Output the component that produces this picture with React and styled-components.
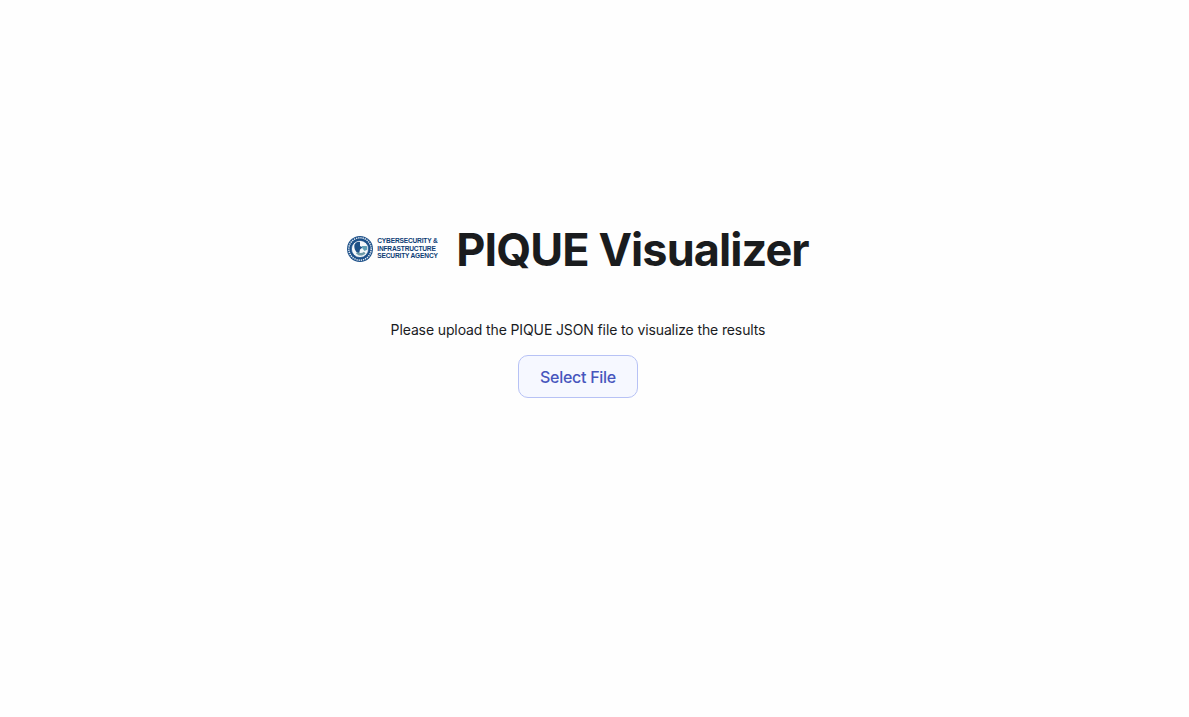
import React from 'react';
import styled, { createGlobalStyle } from 'styled-components';

const GlobalStyle = createGlobalStyle`
  html, body {
    margin: 0;
    padding: 0;
    background: #fefefe;
    font-family: Inter, "Liberation Sans", sans-serif;
  }
`;

const Page = styled.main`
  box-sizing: border-box;
  min-height: 717px;
  padding: 222px 33px 0 0;
  display: flex;
  flex-direction: column;
  align-items: center;
`;

const Header = styled.header`
  display: flex;
  align-items: center;
  gap: 17px;
  height: 56px;
`;

const Logo = styled.div`
  display: flex;
  align-items: center;
  gap: 4px;
  width: 92px;
  margin-top: -3px;
`;

const LogoText = styled.div`
  display: flex;
  flex-direction: column;
  font-family: "Liberation Sans", Arial, sans-serif;
  font-weight: 700;
  font-size: 6.6px;
  line-height: 7.6px;
  color: #0c3d75;
  white-space: nowrap;
  letter-spacing: -0.17px;
`;

const Title = styled.h1`
  margin: 0;
  font-size: 45px;
  line-height: 56px;
  font-weight: 700;
  color: #1a1c1e;
  letter-spacing: -0.92px;
  white-space: nowrap;
`;

const Prompt = styled.p`
  margin: 42px 0 0;
  font-size: 14px;
  line-height: 20px;
  color: #1a1c1e;
  letter-spacing: -0.12px;
`;

const SelectButton = styled.button`
  box-sizing: border-box;
  margin-top: 15px;
  width: 120px;
  height: 43px;
  border: 1px solid #b7c2f5;
  border-radius: 10px;
  background: #f6f8ff;
  color: #4756bd;
  font-family: inherit;
  font-size: 16px;
  font-weight: 500;
  letter-spacing: -0.28px;
  cursor: pointer;
`;

function Seal() {
  return (
    <svg width="26" height="26" viewBox="0 0 26 26" aria-hidden="true">
      <circle cx="13" cy="13" r="13" fill="#1b4f88" />
      <circle cx="13" cy="13" r="11.2" fill="none" stroke="#e6ecf3" strokeWidth="1.5" strokeDasharray="1.3 0.9" />
      <circle cx="13" cy="13" r="8.6" fill="#f4f7fa" />
      <path d="M7.5 8.5 C9 6 11.5 5.5 13 6 L13 10 L15.5 11.5 L13 13.5 L12 18 C9.5 17 6.5 13 7.5 8.5Z" fill="#1c4f86" />
      <path d="M14.5 10 L19.8 10 L20.5 13.5 L17.5 15 L15.5 12.5Z" fill="#5f9db3" />
      <path d="M9 17.5 C11.5 20 15 20.5 18.5 17.5 L17 15.8 C15 17.5 12.5 17.5 10.5 16Z" fill="#6d9aa8" />
      <circle cx="13" cy="13" r="8.6" fill="none" stroke="#1b4f88" strokeWidth="0.7" />
    </svg>
  );
}

export default function App() {
  return (
    <>
      <GlobalStyle />
      <Page>
        <Header>
          <Logo>
            <Seal />
            <LogoText>
              <span>CYBERSECURITY &amp;</span>
              <span>INFRASTRUCTURE</span>
              <span>SECURITY AGENCY</span>
            </LogoText>
          </Logo>
          <Title>PIQUE Visualizer</Title>
        </Header>
        <Prompt>Please upload the PIQUE JSON file to visualize the results</Prompt>
        <SelectButton>Select File</SelectButton>
      </Page>
    </>
  );
}
